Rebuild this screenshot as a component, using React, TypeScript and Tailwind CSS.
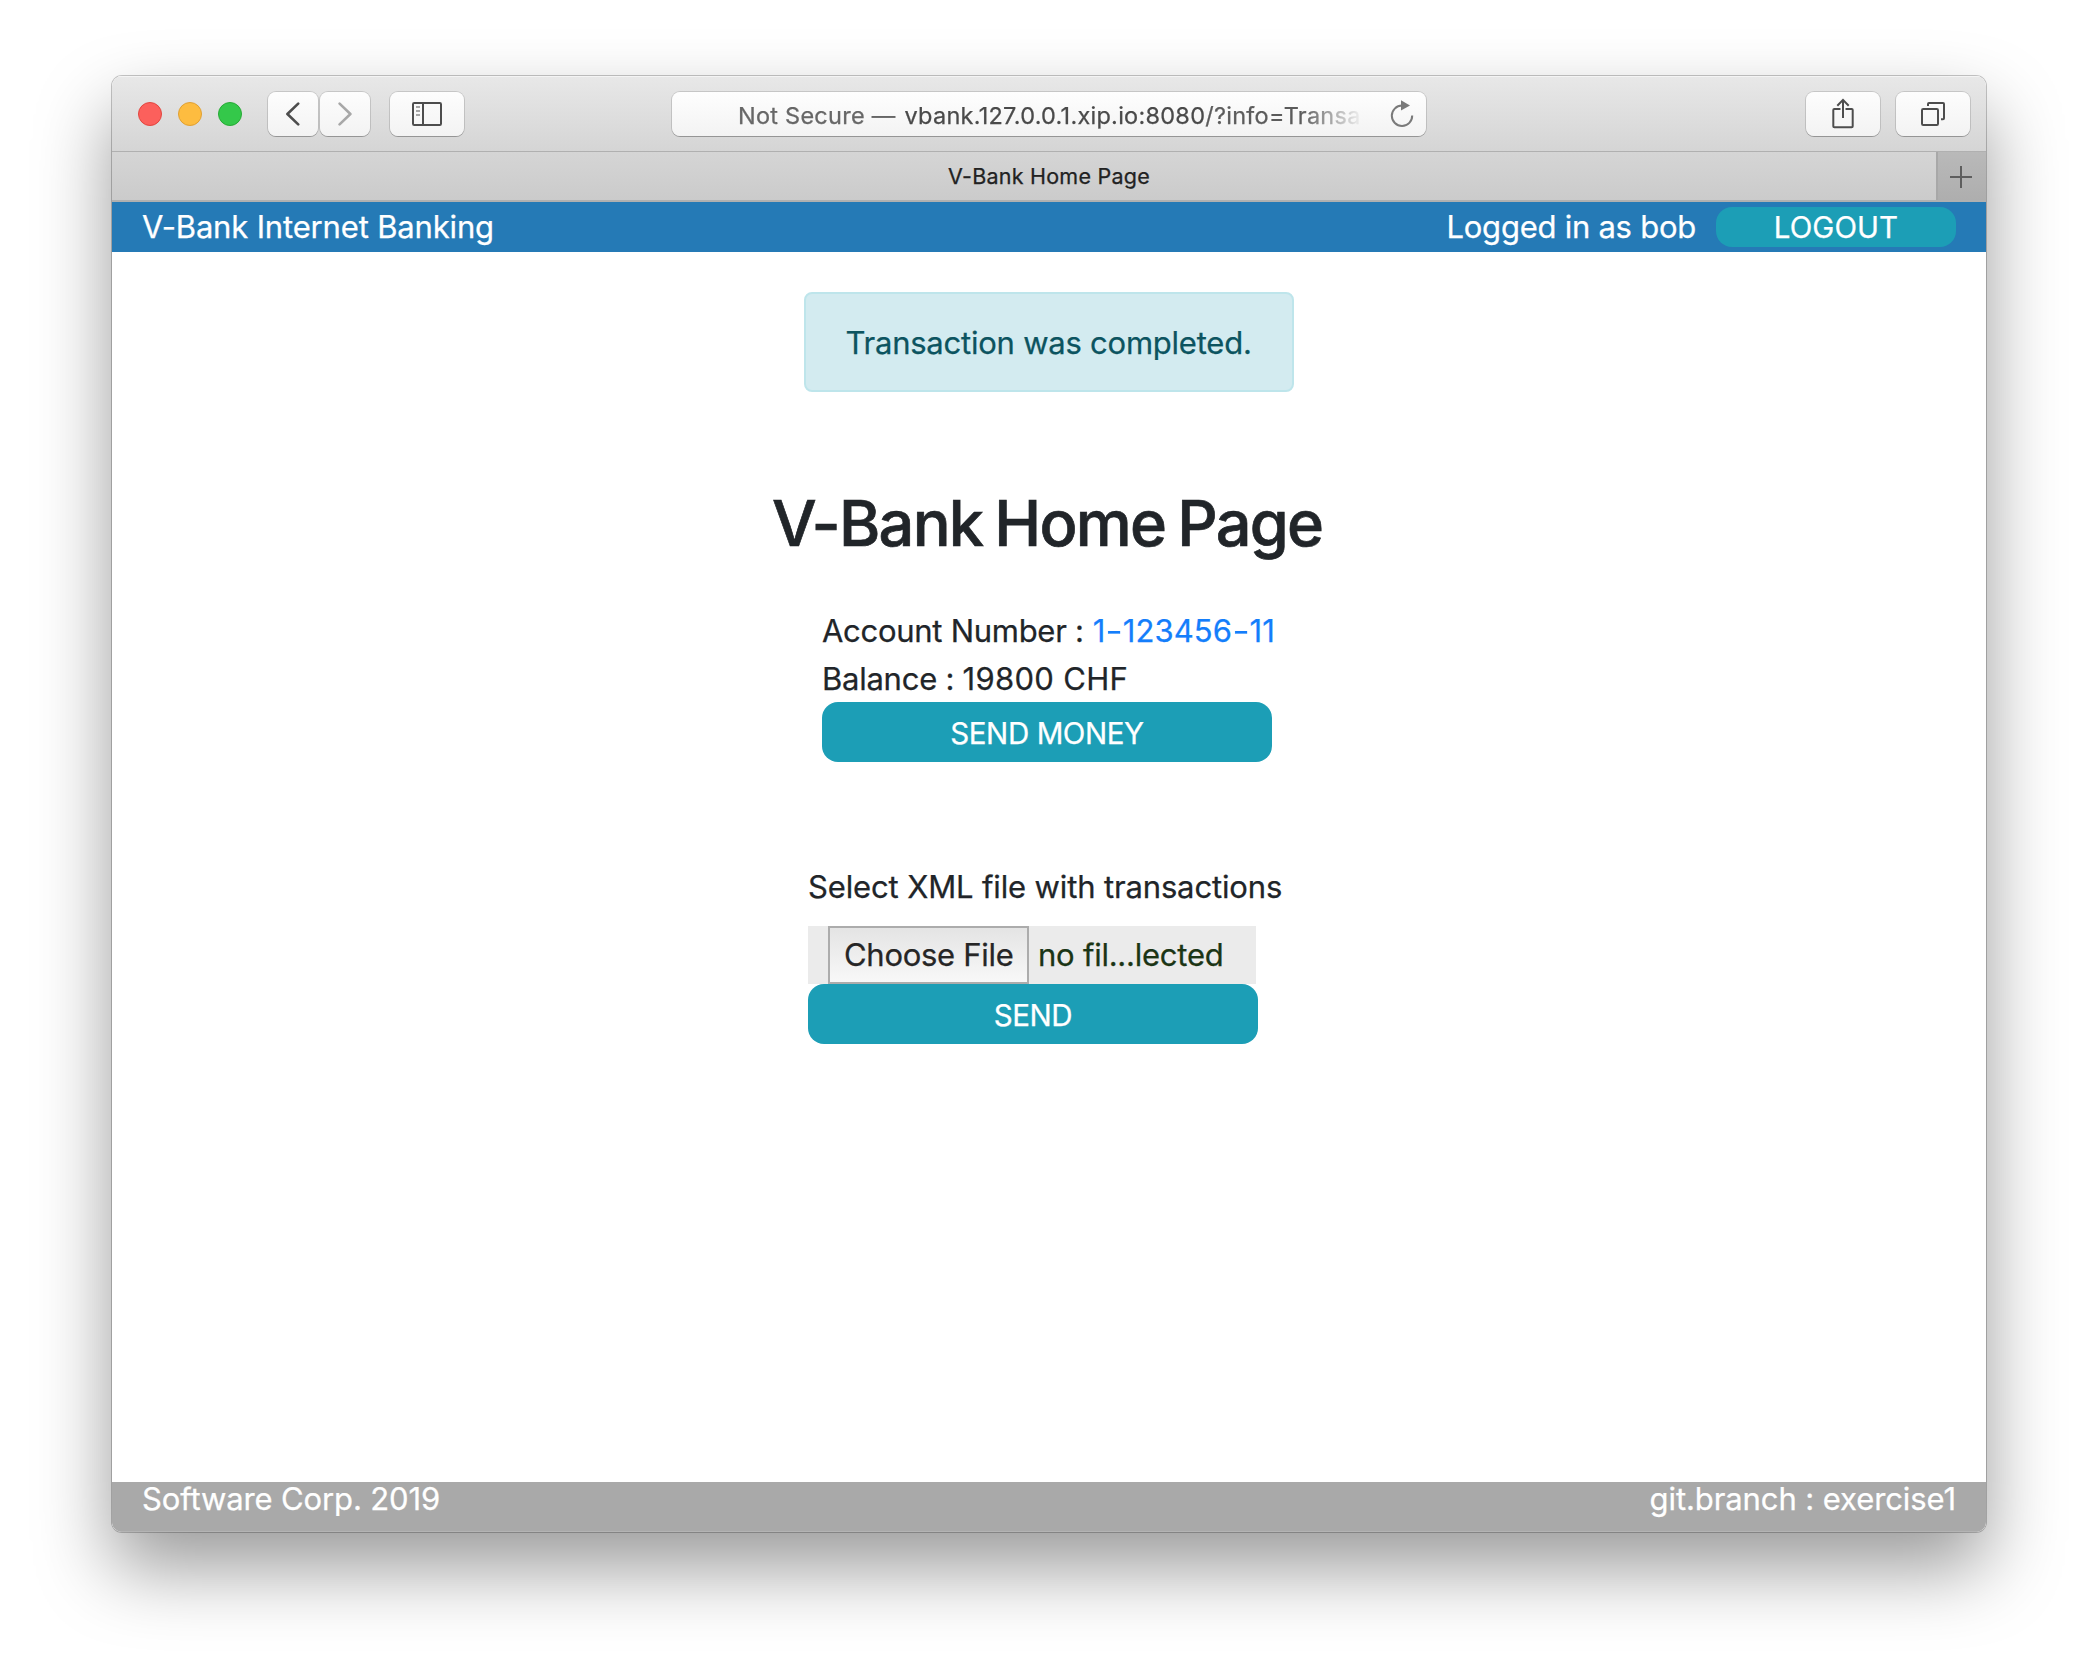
import type { ReactNode } from "react";

function ToolButton({ className, children }: { className: string; children: ReactNode }) {
  return (
    <button
      className={`flex h-[44px] shrink-0 items-center justify-center rounded-[8px] bg-linear-to-b from-[#fdfdfd] to-[#f3f3f3] shadow-[0_0_0_1px_rgba(0,0,0,0.13),0_1px_0_0_rgba(0,0,0,0.2)] ${className}`}
    >
      {children}
    </button>
  );
}

function TrafficLights() {
  return (
    <div className="flex gap-4">
      <span className="size-6 rounded-full border border-[#e2463f] bg-[#fc605c]" />
      <span className="size-6 rounded-full border border-[#e0a033] bg-[#fdbc40]" />
      <span className="size-6 rounded-full border border-[#27aa35] bg-[#34c84a]" />
    </div>
  );
}

function Toolbar() {
  return (
    <div className="flex h-[76px] items-center border-b border-[#b0b0b0] bg-linear-to-b from-[#e8e8e8] to-[#d5d5d5] pt-px pr-4 pl-[26px] shadow-[inset_0_1px_0_#f4f4f4]">
      <TrafficLights />
      <ToolButton className="ml-[26px] w-[50px]">
        <svg width="24" height="24" viewBox="0 0 24 24" fill="none" stroke="#4d4d4d" strokeWidth="2.6" strokeLinecap="round" strokeLinejoin="round">
          <path d="M17.2 1.6 6.4 12l10.800 10.400" />
        </svg>
      </ToolButton>
      <ToolButton className="ml-0.5 w-[50px]">
        <svg width="24" height="24" viewBox="0 0 24 24" fill="none" stroke="#a8a8a8" strokeWidth="2.6" strokeLinecap="round" strokeLinejoin="round">
          <path d="M6.600 1.600 17.400 12 6.600 22.400" />
        </svg>
      </ToolButton>
      <ToolButton className="ml-5 w-[74px]">
        <svg width="30" height="24" viewBox="0 0 30 24" fill="none" stroke="#4d4d4d" strokeWidth="2">
          <rect x="1" y="1" width="28" height="22" rx="1.2" />
          <path d="M11 1v22" />
          <path d="M4 5h4M4 9h4M4 13h4" stroke="#8a8a8a" strokeWidth="1.6" />
        </svg>
      </ToolButton>
      <div className="ml-[208px] flex h-[44px] w-[754px] items-center justify-between rounded-[8px] bg-linear-to-b from-[#fefefe] to-[#f3f3f3] pr-[12px] pl-[66px] shadow-[0_0_0_1px_rgba(0,0,0,0.13),0_1px_0_0_rgba(0,0,0,0.2)]">
        <div className="flex gap-[9px] overflow-hidden pt-[3px] text-[23.5px] whitespace-nowrap text-[#4a4a4a] mask-r-from-[563px] mask-r-to-[626px]">
          <span className="tracking-[0.25px] text-[#676767]">Not Secure —</span>
          <span className="tracking-[0.26px]">
            vbank.127.0.0.1.xip.io:8080<span className="text-[#5c5c5c]">/?info=Transa</span>
          </span>
        </div>
        <svg width="24" height="28" viewBox="0 0 24 28" fill="none">
          <path d="M12 5.6A10.2 10.2 0 1 0 22.2 15.6" stroke="#7a7a7a" strokeWidth="2" />
          <path d="M11 0.2 20 5.6 11 10.6Z" fill="#7a7a7a" />
        </svg>
      </div>
      <ToolButton className="ml-auto w-[74px]">
        <svg width="24" height="32" viewBox="0 0 24 32" fill="none" stroke="#4d4d4d" strokeWidth="2">
          <path d="M9.5 11H3.3a1 1 0 0 0-1 1v16.200a1 1 0 0 0 1 1h17.400a1 1 0 0 0 1-1V12a1 1 0 0 0-1-1h-6.200" />
          <path d="M12 20V2M6.300 7.800 12 1.900l5.700 5.900" />
        </svg>
      </ToolButton>
      <ToolButton className="ml-4 w-[74px]">
        <svg width="24" height="24" viewBox="0 0 24 24" fill="none" stroke="#4d4d4d" strokeWidth="2">
          <rect x="1" y="7" width="16" height="16" rx="1.2" />
          <path d="M7 4V2a1 1 0 0 1 1-1h14a1 1 0 0 1 1 1v14.200a1 1 0 0 1-1 1h-2" />
        </svg>
      </ToolButton>
    </div>
  );
}

function TabBar() {
  return (
    <div className="flex h-[50px] border-b-2 border-[#b0b0b0] bg-linear-to-b from-[#d5d5d5] to-[#cbcbcb]">
      <div className="flex flex-1 items-center justify-center pl-[50px] text-[21.5px] tracking-[0.23px] text-[#222]">
        V-Bank Home Page
      </div>
      <button className="flex w-[50px] items-center justify-center border-l-2 border-[#a8a8a8] bg-linear-to-b from-[#b9b9b9] to-[#aeaeae] pt-[2px] pr-[2px]">
        <svg width="22" height="22" viewBox="0 0 22 22" stroke="#5e5e5e" strokeWidth="2">
          <path d="M11 0v22M0 11h22" />
        </svg>
      </button>
    </div>
  );
}

function Navbar() {
  return (
    <header className="flex h-[50px] items-center bg-[#257ab6] pr-[30px] pl-[30px] text-white">
      <span className="tracking-[-0.16px]">V-Bank Internet Banking</span>
      <span className="ml-auto tracking-[-0.25px]">Logged in as bob</span>
      <button className="ml-[20px] flex h-10 w-[240px] items-center justify-center rounded-2xl bg-[#1c9eb6] text-[29.5px] tracking-[0.08px]">
        LOGOUT
      </button>
    </header>
  );
}

function ActionButton({ children }: { children: ReactNode }) {
  return (
    <button className="flex h-[60px] w-[450px] items-center justify-center rounded-2xl bg-[#1c9eb6] pt-[3px] text-[29.5px] tracking-[-0.42px] text-white">
      {children}
    </button>
  );
}

function Account() {
  return (
    <section className="mt-[45px] ml-[710px] w-[460px]">
      <p className="flex h-12 gap-[9px] leading-[49px]">
        <span className="tracking-[-0.28px]">Account Number :</span>
        <a className="tracking-[0.1px] text-[#147efb]">
          1<span className="mx-[1.5px] inline-block scale-x-[1.2]">-</span>123456
          <span className="mx-[1.5px] inline-block scale-x-[1.2]">-</span>11
        </a>
      </p>
      <p className="h-12 leading-[49px]">
        <span className="tracking-[-0.25px]">Balance : </span>
        <span className="tracking-[0.3px]">19800 CHF</span>
      </p>
      <ActionButton>SEND MONEY</ActionButton>
    </section>
  );
}

function Upload() {
  return (
    <section className="mt-[100px] ml-[696px] w-[480px]">
      <p className="h-12 leading-[49px] tracking-[-0.14px]">Select XML file with transactions</p>
      <div className="mt-4 flex h-[58px] w-[448px] items-center bg-[#ebebeb] pl-5">
        <button className="flex h-[58px] w-[201px] items-center border-2 border-[#acacac] bg-linear-to-b from-[#e4e4e4] to-[#f8f8f8] pl-[14px] tracking-[-0.28px] text-[#262626]">
          Choose File
        </button>
        <span className="ml-[9px] tracking-[-0.24px] text-[#1b3515]">no fil...lected</span>
      </div>
      <ActionButton>SEND</ActionButton>
    </section>
  );
}

export default function App() {
  return (
    <div className="h-[1680px] w-[2098px] overflow-hidden bg-white pt-[76px] pl-[112px] font-[Inter,sans-serif] text-[31px] whitespace-nowrap text-[#212529] [-webkit-text-stroke:0.25px]">
      <div className="w-[1874px] rounded-[10px] shadow-[0_0_0_1px_rgba(0,0,0,0.22),0_36px_76px_rgba(0,0,0,0.4)]">
        <div className="flex h-[1456px] flex-col overflow-hidden rounded-[10px] bg-white">
          <Toolbar />
          <TabBar />
          <Navbar />
          <main className="flex-1">
            <div className="mt-10 ml-[692px] flex h-[100px] w-[490px] items-center rounded-[8px] border-2 border-[#bee5eb] bg-[#d3ebf0] px-[39.5px] pt-[2px] tracking-[-0.23px] text-[#0c5460]">
              Transaction was completed.
            </div>
            <h1 className="mt-[93px] ml-[660px] text-[63px] leading-[76px] font-medium tracking-[-1.75px] [-webkit-text-stroke:0.7px] [word-spacing:-3px]">
              V-Bank Home Page
            </h1>
            <Account />
            <Upload />
          </main>
          <footer className="h-[50px] bg-[#a9a9a9] px-[30px] text-white shadow-[inset_0_-1px_0_#b4b4b4]">
            <div className="flex h-[34px] items-center justify-between">
              <span className="tracking-[-0.13px]">Software Corp. 2019</span>
              <span className="tracking-[-0.09px]">git.branch : exercise1</span>
            </div>
          </footer>
        </div>
      </div>
    </div>
  );
}
